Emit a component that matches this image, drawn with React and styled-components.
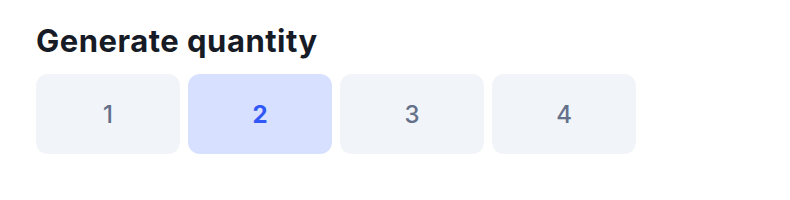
import React, { useState } from 'react';
import styled, { createGlobalStyle } from 'styled-components';

const GlobalStyle = createGlobalStyle`
  body {
    margin: 0;
    background: #ffffff;
    font-family: Inter, "Liberation Sans", sans-serif;
  }
`;

const Wrapper = styled.div`
  padding: 20px 36px;
`;

const Title = styled.h2`
  margin: 0 0 12px;
  font-size: 31px;
  font-weight: 700;
  line-height: 42px;
  color: #161b26;
  letter-spacing: 0.5px;
`;

const Options = styled.div`
  display: flex;
  gap: 8px;
`;

const Option = styled.button`
  width: 144px;
  height: 80px;
  border: none;
  border-radius: 12px;
  font-family: inherit;
  font-size: 24px;
  cursor: pointer;
  background: ${({ active }) => (active ? '#d7e0ff' : '#f1f4f8')};
  color: ${({ active }) => (active ? '#3158f6' : '#64708a')};
  font-weight: ${({ active }) => (active ? 700 : 500)};
`;

const App = () => {
  const [qty, setQty] = useState(2);

  return (
    <Wrapper>
      <GlobalStyle />
      <Title>Generate quantity</Title>
      <Options>
        {[1, 2, 3, 4].map((n) => (
          <Option key={n} active={qty === n} onClick={() => setQty(n)}>
            {n}
          </Option>
        ))}
      </Options>
    </Wrapper>
  );
};

export default App;
